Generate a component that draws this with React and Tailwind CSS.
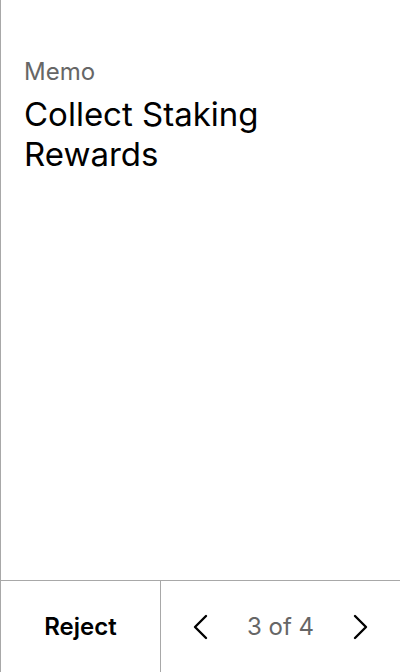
export default function App() {
  return (
    <div className="w-[400px] h-[672px] bg-white border-l border-[#a8a8a8] flex flex-col" style={{ fontFamily: "Inter, 'Noto Sans', sans-serif" }}>
      <div className="flex-1 pl-[23px] pt-[56px]">
        <div className="text-[24px] leading-[32px] text-[#666666]">Memo</div>
        <div className="mt-[6px] text-[33px] leading-[40px] text-black w-[290px]">Collect Staking Rewards</div>
      </div>
      <div className="h-[92px] border-t border-[#a8a8a8] flex">
        <div className="w-[159px] flex items-center justify-center text-[24px] font-semibold text-black">Reject</div>
        <div className="flex-1 border-l border-[#a8a8a8] flex items-center justify-between pl-[27px] pr-[27px]">
          <svg width="28" height="28" viewBox="0 0 28 28" fill="none" stroke="black" strokeWidth="2.4" strokeLinecap="round" strokeLinejoin="round"><path d="M18 3 L7 14 L18 25" /></svg>
          <span className="text-[24px] text-[#666666]">3 of 4</span>
          <svg width="28" height="28" viewBox="0 0 28 28" fill="none" stroke="black" strokeWidth="2.4" strokeLinecap="round" strokeLinejoin="round"><path d="M10 3 L21 14 L10 25" /></svg>
        </div>
      </div>
    </div>
  );
}
